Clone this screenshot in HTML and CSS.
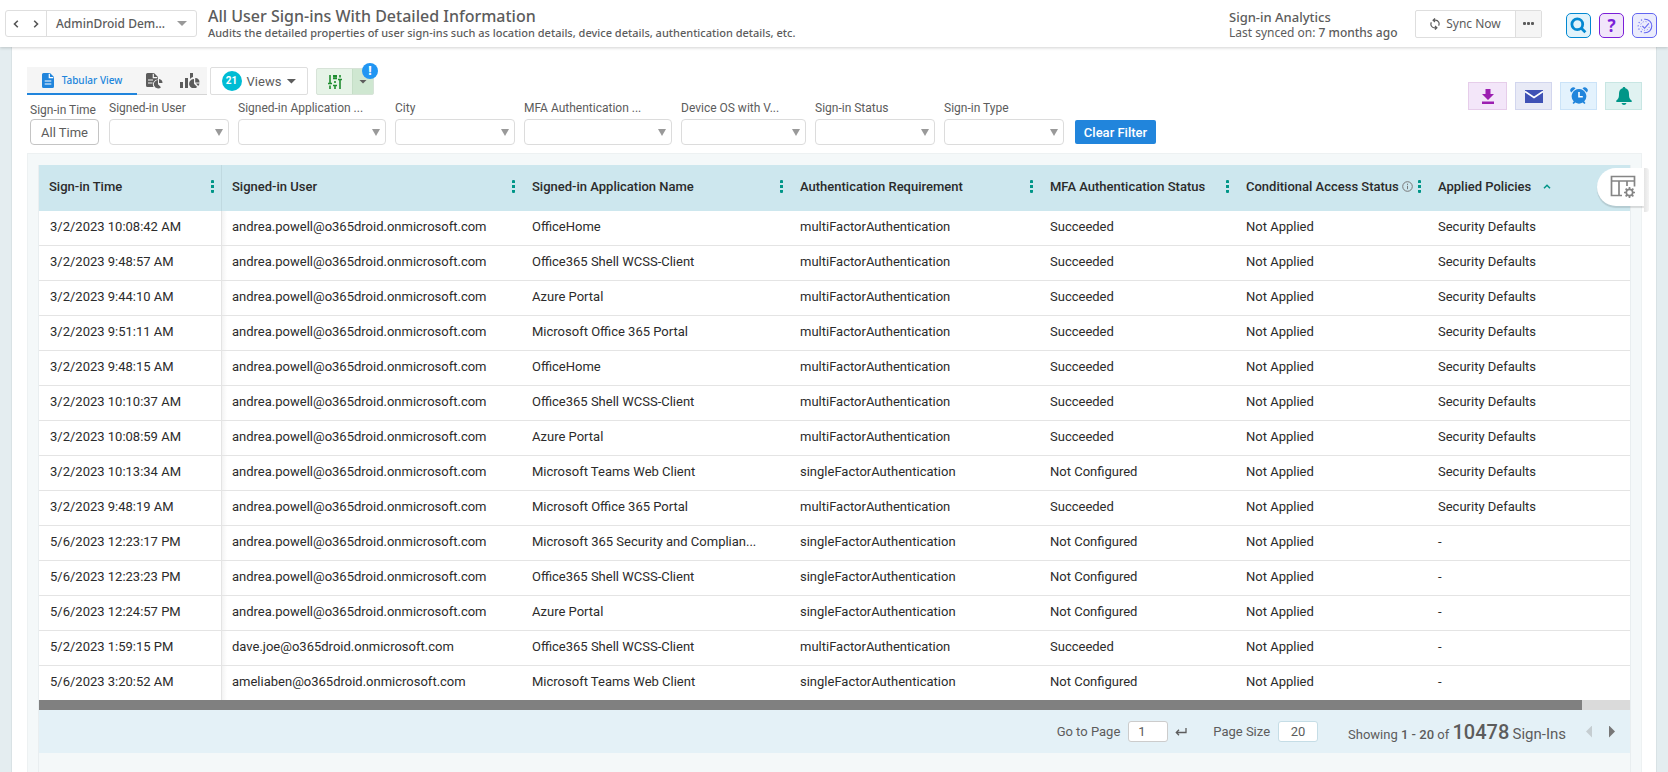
FILE: index.html
```html
<!DOCTYPE html>
<html lang="en">
<head>
    <meta charset="UTF-8">
    <meta name="viewport" content="width=device-width, initial-scale=1.0">
    <title>All User Sign-ins With Detailed Information</title>
    <link rel="stylesheet" href="styles.css">
    <script src="script.js" defer></script>
</head>
<body>
    <header class="topbar">
        <div class="report-nav">
            <button class="nav-arrow" aria-label="Previous report"><svg width="6" height="8" viewBox="0 0 6 8"><path d="M4.800.8 1.500 4l3.300 3.200"/></svg></button>
            <button class="nav-arrow" aria-label="Next report"><svg width="6" height="8" viewBox="0 0 6 8"><path d="M1.200.8 4.500 4 1.200 7.200"/></svg></button>
            <button class="tenant">AdminDroid Dem...<span class="caret"></span></button>
        </div>
        <div class="heading">
            <h1>All User Sign-ins With Detailed Information</h1>
            <p>Audits the detailed properties of user sign-ins such as location details, device details, authentication details, etc.</p>
        </div>
        <div class="sync-info">
            <strong>Sign-in Analytics</strong>
            <span>Last synced on: <b>7 months ago</b></span>
        </div>
        <div class="sync-group">
            <button class="sync-now"><svg width="10" height="12" viewBox="0 0 10 12"><path d="M3.2 2.2H5.5A3.6 3.6 0 0 1 8.6 7.6M6.8 9.8H4.5A3.6 3.6 0 0 1 1.4 4.4M5 .4 3.1 2.2 5 4M5 8l1.9 1.8L5 11.6"/></svg>Sync Now</button>
            <button class="sync-more" aria-label="More"><i></i><i></i><i></i></button>
        </div>
        <div class="top-icons">
            <button class="top-icon search" aria-label="Search"><svg width="17" height="17" viewBox="0 0 17 17"><circle cx="7.3" cy="7.3" r="5.4"/><path d="m10.8 10.8 4.6 4.4"/></svg></button>
            <button class="top-icon help" aria-label="Help">?</button>
            <button class="top-icon tour" aria-label="Tour"><svg width="16" height="16" viewBox="0 0 16 16"><path d="M8 1.2a6.8 6.8 0 0 1 0 13.6"/><path d="M8 14.8A6.8 6.8 0 0 1 8 1.2" stroke-dasharray="1.200 2.200"/><path d="M9.500 3.800A4.400 4.400 0 1 0 12.400 8" stroke-width=".8" stroke-dasharray="1 1.800"/><path d="m5.4 8 2.2 2.3 4.2-5"/></svg></button>
        </div>
    </header>

    <main class="page">
        <section class="controls">
            <div class="controls-left">
                <div class="toolbar">
                    <div class="tabs">
                        <button class="tab selected"><svg width="12" height="15" viewBox="0 0 12 15"><path fill="currentColor" d="M1.5 0H8l4 4v9.500a1.500 1.500 0 0 1-1.500 1.500h-9A1.500 1.500 0 0 1 0 13.500v-12A1.500 1.500 0 0 1 1.500 0z"/><path d="M7.300.8v3.900h4M2.700 8h6.600M2.700 11h6.600" fill="none" stroke="#fff" stroke-width="1.200"/></svg>Tabular View</button>
                        <button class="tab icon-tab" aria-label="Report view"><svg width="17" height="16" viewBox="0 0 17 16"><path fill="currentColor" d="M1.500 0H8l4 4v2.500A5 5 0 0 0 7.600 14H1.500A1.500 1.500 0 0 1 0 12.500v-11A1.500 1.500 0 0 1 1.500 0zM12 7v4.300l3 2.900A4.200 4.200 0 1 1 12 7zM13 6a4 4 0 0 1 3.500 4H13z"/><path d="M7.300.8v3.900h4M2 7h5M2 10h4.500" fill="none" stroke="#f5f5f5" stroke-width="1.200"/></svg></button>
                        <button class="tab icon-tab" aria-label="Chart view"><svg width="20" height="15" viewBox="0 0 20 15"><path fill="currentColor" d="M0 9h3v6H0zM5 5h3v10H5zM10 0h3v4a6 6 0 0 0-3 2zM14 6v4.800l3.200 3.200A4.700 4.700 0 1 1 14 6zM15.200 5a4.500 4.500 0 0 1 4.300 4.500h-4.300zM16 10.500h3.500a4 4 0 0 1-1.300 2.500z"/></svg></button>
                    </div>
                    <button class="views"><span class="count">21</span>Views<span class="caret"></span></button>
                    <div class="filter-toggle">
                        <button class="filter-main" aria-label="Filters"><svg width="14" height="14" viewBox="0 0 14 14"><path d="M2 0v8M2 10.500V14M0 8.500h4M7 0v2.500M7 6v2M5 3.500h4M5 10.500h4M7 10v4M5.800 0v2.500M8.200 0v2.500M12 0v2.500M12 5v9M10 4.500h4"/></svg></button>
                        <button class="filter-drop" aria-label="Filter options"><span class="caret"></span></button>
                        <span class="alert">!</span>
                    </div>
                </div>
                <div class="filters">
                    <div class="filter time">
                        <label for="time">Sign-in Time</label>
                        <button id="time">All Time</button>
                    </div>
                    <div class="filter">
                        <label for="user">Signed-in User</label>
                        <select id="user"></select>
                    </div>
                    <div class="filter wide">
                        <label for="app">Signed-in Application ...</label>
                        <select id="app"></select>
                    </div>
                    <div class="filter">
                        <label for="city">City</label>
                        <select id="city"></select>
                    </div>
                    <div class="filter wide">
                        <label for="mfa">MFA Authentication ...</label>
                        <select id="mfa"></select>
                    </div>
                    <div class="filter medium">
                        <label for="os">Device OS with V...</label>
                        <select id="os"></select>
                    </div>
                    <div class="filter">
                        <label for="status">Sign-in Status</label>
                        <select id="status"></select>
                    </div>
                    <div class="filter">
                        <label for="type">Sign-in Type</label>
                        <select id="type"></select>
                    </div>
                    <button class="clear">Clear Filter</button>
                </div>
            </div>
            <div class="actions">
                <button class="action download" aria-label="Download"><svg width="14" height="15" viewBox="0 0 14 15"><path fill="currentColor" d="M4.500 0h5v5H13l-6 6-6-6h3.500zM1 12.500h12V15H1z"/></svg></button>
                <button class="action mail" aria-label="Email"><svg width="18" height="13" viewBox="0 0 18 13"><path fill="currentColor" d="M0 0h18v13H0z"/><path d="m0 1.500 9 6 9-6" fill="none" stroke="#fff" stroke-width="1.600"/></svg></button>
                <button class="action schedule" aria-label="Schedule"><svg width="18" height="18" viewBox="0 0 18 18"><path fill="currentColor" d="M9 2a7.300 7.300 0 0 1 5.200 12.400l1.300 1.500-1.200 1.100-1.500-1.500a7.300 7.300 0 0 1-7.600 0L3.700 17l-1.200-1.100 1.300-1.500A7.300 7.300 0 0 1 9 2zM1.200 5.500A2.800 2.800 0 0 1 5.500 1.200zM12.500 1.200a2.800 2.800 0 0 1 4.300 4.300z"/><path d="M9 5v4.800h3.800" fill="none" stroke="#fff" stroke-width="1.600"/></svg></button>
                <button class="action notify" aria-label="Alerts"><svg width="16" height="18" viewBox="0 0 16 18"><path fill="currentColor" d="M8 0c.8 0 1.300.5 1.400 1.300C12 2 13 4.300 13 7c0 4 .8 5 2.700 6.500V15H.3v-1.500C2.200 12 3 11 3 7c0-2.700 1-5 3.600-5.700C6.700.5 7.200 0 8 0zM5.500 16h5c-.4 1.300-1.300 2-2.500 2s-2.100-.7-2.500-2z"/></svg></button>
            </div>
        </section>

        <section class="panel">
            <button class="column-settings" aria-label="Column settings"><svg width="26" height="24" viewBox="0 0 26 24"><path d="M12 20.500H1.500v-19h23v10M1.500 6h23M9 6v14.500M17 6v5"/><circle cx="19.500" cy="17.500" r="3.200"/><path d="M19.500 12v2.300M19.500 20.700V23M14 17.500h2.300M22.700 17.500H25M15.600 13.600l1.600 1.600M21.800 19.800l1.600 1.600M23.400 13.600l-1.600 1.600M17.200 19.800l-1.600 1.600"/></svg></button>
            <div class="grid">
                <table>
                    <colgroup>
                        <col class="c-time"><col class="c-user"><col class="c-app"><col class="c-req"><col class="c-mfa"><col class="c-access"><col>
                    </colgroup>
                    <thead>
                        <tr>
                            <th><div>Sign-in Time<span class="dots"></span></div></th>
                            <th><div>Signed-in User<span class="dots"></span></div></th>
                            <th><div>Signed-in Application Name<span class="dots"></span></div></th>
                            <th><div>Authentication Requirement<span class="dots"></span></div></th>
                            <th><div>MFA Authentication Status<span class="dots"></span></div></th>
                            <th><div>Conditional Access Status<svg class="info" width="11" height="11" viewBox="0 0 11 11"><circle cx="5.500" cy="5.500" r="4.800"/><path d="M5.500 4.800v3.400M5.500 2.700v1.200"/></svg><span class="dots"></span></div></th>
                            <th><div>Applied Policies<svg class="sort" width="8" height="5" viewBox="0 0 8 5"><path d="M1 4.300 4 1.300l3 3"/></svg></div></th>
                        </tr>
                    </thead>
                    <tbody id="signins"></tbody>
                </table>
                <div class="scroll-track"><div class="scroll-thumb"></div></div>
                <footer class="pager">
                    <label for="page">Go to Page</label>
                    <input id="page" class="page-no" value="1">
                    <button class="go" aria-label="Go"><svg width="12" height="8" viewBox="0 0 12 8"><path d="M11 0v4.500H1.500M4 1.800 1.300 4.500 4 7.200"/></svg></button>
                    <label for="size">Page Size</label>
                    <input id="size" class="page-size" value="20">
                    <div class="showing">Showing <b>1 - 20</b> of <strong>10478</strong> <span>Sign-Ins</span></div>
                    <button class="step prev" aria-label="Previous page"></button>
                    <button class="step next" aria-label="Next page"></button>
                </footer>
            </div>
        </section>
    </main>
</body>
</html>
```
FILE: styles.css
```css
* { box-sizing: border-box; }
body { margin: 0; height: 100vh; overflow: hidden; display: flex; flex-direction: column; background: #e4edf0; font-family: Roboto, "Liberation Sans", sans-serif; font-size: 13px; color: #5c5c5c; }
button, input, select { font: inherit; color: inherit; margin: 0; padding: 0; }
button { border: none; background: none; cursor: pointer; display: flex; align-items: center; justify-content: center; }
svg { display: block; flex: none; }
.caret { width: 10px; height: 5px; background: #5c5c5c; clip-path: polygon(0 0, 100% 0, 50% 100%); }

/* top bar */
.topbar { position: relative; z-index: 1; flex: none; height: 47px; padding: 0 11px 0 5px; display: flex; align-items: center; background: #fff; box-shadow: 0 1px 3px rgba(0, 0, 0, 0.18); font-family: "Noto Sans", "Open Sans", sans-serif; }
.report-nav { display: flex; width: 192px; height: 27px; border: 1px solid #dedede; border-radius: 3px; }
.nav-arrow { width: 20px; }
.nav-arrow svg { fill: none; stroke: #555; stroke-width: 1.6; }
.tenant { flex: 1; justify-content: space-between; padding: 0 9px; border-left: 1px solid #dedede; font-size: 12px; font-weight: 500; }
.tenant .caret { background: #999; }
.heading { flex: 1; margin-left: 11px; }
h1 { margin: 0; font-size: 16px; line-height: 18px; font-weight: 500; }
.heading p { margin: 0; font-size: 11px; line-height: 15px; font-weight: 500; }
.sync-info { width: 186px; padding-top: 2px; display: flex; flex-direction: column; line-height: 16px; }
.sync-info span { font-size: 12px; }
.sync-info strong, .sync-info b { font-weight: 500; }
.sync-group { display: flex; width: 127px; height: 28px; border: 1px solid #dedede; border-radius: 2px; }
.sync-now { flex: 1; gap: 6px; font-size: 12px; }
.sync-now svg { fill: none; stroke: #5c5c5c; stroke-width: 1.2; }
.sync-more { width: 26px; gap: 1px; background: #f5f5f5; border-left: 1px solid #dedede; }
.sync-more i { width: 3px; height: 3px; border-radius: 1px; background: #5c5c5c; }
.top-icons { display: flex; gap: 8px; margin-left: 24px; padding-top: 4px; }
.top-icon { width: 25px; height: 25px; border: 1px solid; border-radius: 5px; }
.top-icon svg { fill: none; stroke: currentColor; }
.search { color: #0288d1; background: #e1f3fb; }
.search svg { stroke-width: 2.8; }
.help { color: #7b1fd8; background: #f1e6fa; font-size: 17px; font-weight: 700; }
.tour { color: #6366f1; background: #ebecfc; }
.tour svg { stroke-width: 1.1; }

/* page */
.page { flex: 1; margin: 0 11px; padding: 20px 14px 0 15px; background: #fff; border: 1px solid #d9e2e5; border-width: 0 1px; display: flex; flex-direction: column; }
.controls { display: flex; justify-content: space-between; height: 86px; flex: none; }
.toolbar { display: flex; gap: 3px; height: 28px; }
.tabs { display: flex; background: #f5f5f5; border-bottom: 1px solid #d5d5d5; }
.tab { width: 35px; color: #5c5c5c; }
.tab.selected { width: 110px; gap: 8px; height: 28px; color: #2185dc; border-bottom: 2px solid #2185dc; font-family: "Noto Sans", sans-serif; font-size: 10px; font-weight: 500; }
.views { width: 98px; gap: 5px; border: 1px solid #dedede; border-radius: 2px; }
.count { width: 20px; height: 20px; border-radius: 50%; background: #00bcd4; color: #fff; font-size: 10px; line-height: 20px; font-weight: 700; }
.filter-toggle { position: relative; display: flex; width: 58px; height: 27px; margin: 1px 0 0 5px; border: 1px solid #d7e3d8; border-radius: 2px; background: #e6f3e7; }
.filter-main { flex: 1; }
.filter-main svg { fill: none; stroke: #1e8c2f; stroke-width: 1.6; }
.filter-drop { width: 21px; background: #cfe7d1; border-left: 1px solid #c5dec7; }
.filter-drop .caret { width: 8px; height: 4px; }
.alert { position: absolute; top: -6px; right: -5px; width: 16px; height: 16px; border-radius: 50%; background: #2196f3; color: #fff; font-size: 12px; line-height: 16px; font-weight: 900; text-align: center; }

.filters { display: flex; align-items: flex-end; gap: 9px; height: 50px; padding-left: 3px; }
.filter { position: relative; width: 120px; }
.filter.wide { width: 148px; }
.filter.medium { width: 125px; }
.filter label { display: block; font-size: 12px; line-height: 16px; margin-bottom: 3px; white-space: nowrap; }
.filter select { display: block; appearance: none; width: 100%; height: 26px; border: 1px solid #dcdcdc; border-radius: 4px; background: #fff; }
.filter:not(.time)::after { content: ""; position: absolute; right: 6px; bottom: 9px; width: 8px; height: 7px; background: #999; clip-path: polygon(0 0, 100% 0, 50% 100%); }
.filter.time { width: 70px; }
.time label { margin-bottom: 1px; }
.time button { width: 69px; height: 26px; border: 1px solid #c4c4c4; border-radius: 4px; }
.clear { width: 81px; height: 24px; margin: 0 0 1px 2px; border-radius: 2px; background: #2185dc; color: #fff; font-weight: 500; }

.actions { display: flex; gap: 8px; padding-top: 15px; }
.action { width: 37px; height: 28px; border: 1px solid; }
.download { width: 39px; color: #9c1fb1; background: #f3e6f9; border-color: #e6cdea; }
.mail { color: #3f51b5; background: #e8eaf6; border-color: #d2d6ee; }
.schedule { color: #2185dc; background: #e3f2fd; border-color: #cbe3f8; }
.notify { color: #009688; background: #e0f2f1; border-color: #c8e6e3; }

/* results */
.panel { position: relative; flex: 1; padding: 11px 10px 0; background: #f4f8f9; border: 1px solid #edf1f2; border-bottom: none; }
.grid { border-right: 1px solid #e9eef0; border-left: 1px solid #e9eef0; height: 100%; }
.column-settings { position: absolute; top: 14px; right: -3px; width: 47px; height: 38px; padding-left: 4px; background: #fff; border-radius: 19px 0 0 19px; box-shadow: 0 2px 1px rgba(0, 0, 0, 0.12); }
.column-settings::after { content: ""; position: absolute; top: 0; left: 100%; width: 5px; height: 44px; border-radius: 0 3px 3px 0; background: linear-gradient(90deg, #e4e4e4, #f4f4f4); }
.column-settings svg { fill: none; stroke: #858585; stroke-width: 1.7; }
table { width: 100%; table-layout: fixed; border-collapse: separate; border-spacing: 0; background: #fff; color: #2b2b2b; }
.c-time { width: 183px; }
.c-user { width: 300px; }
.c-app { width: 268px; }
.c-req { width: 250px; }
.c-mfa { width: 196px; }
.c-access { width: 192px; }
th { height: 46px; padding: 0 7px 4px 10px; background: #cde7ee; text-align: left; font-weight: 500; }
th div { display: flex; align-items: center; white-space: nowrap; }
th:first-child { border-right: 1px solid #c0d9e0; }
.dots { margin-left: auto; width: 3px; height: 13px; background: repeating-linear-gradient(#009688 0 3px, transparent 3px 5px); border-radius: 1px; }
.info { margin-left: 3px; fill: none; stroke: #777; }
.sort { margin-left: 12px; fill: none; stroke: #009688; stroke-width: 1.5; }
td { height: 35px; padding: 0 10px 3px; border-bottom: 1px solid #e4e4e4; white-space: nowrap; overflow: hidden; text-overflow: ellipsis; }
td:first-child { padding-left: 11px; border-right: 1px solid #e4e4e4; }
td:nth-child(2) { background: linear-gradient(90deg, #f3f3f3, #fff 5px); }
tr:last-child td { height: 34px; border-bottom: none; }
.scroll-track { height: 10px; background: #dadada; }
.scroll-thumb { width: 97%; height: 10px; background: #808080; }
.pager { display: flex; align-items: center; justify-content: flex-end; height: 43px; padding-right: 15px; background: #e4f1f7; }
.pager input { width: 40px; height: 21px; margin-left: 8px; border: 1px solid #ccc; border-radius: 3px; background: #fff; }
.page-no { padding-left: 9px; }
.pager .page-size { border-color: #c5dde6; text-align: center; }
.go { margin: 0 26px 0 7px; }
.go svg { fill: none; stroke: #5c5c5c; stroke-width: 1.3; }
.showing { margin: 0 20px 0 30px; }
.showing b { font-weight: 500; }
.showing strong { font-size: 20px; font-weight: 500; }
.showing span { font-size: 15px; }
.step { width: 6px; height: 12px; background: #777; clip-path: polygon(0 0, 100% 50%, 0 100%); }
.step.prev { background: #c5cdd1; margin-right: 17px; clip-path: polygon(100% 0, 0 50%, 100% 100%); }
```
FILE: script.js
```js
const domain = "@o365droid.onmicrosoft.com";
const multi = "multiFactorAuthentication";
const single = "singleFactorAuthentication";

const signins = [
    ["3/2/2023 10:08:42 AM", "andrea.powell", "OfficeHome", multi, "Succeeded", "Security Defaults"],
    ["3/2/2023 9:48:57 AM", "andrea.powell", "Office365 Shell WCSS-Client", multi, "Succeeded", "Security Defaults"],
    ["3/2/2023 9:44:10 AM", "andrea.powell", "Azure Portal", multi, "Succeeded", "Security Defaults"],
    ["3/2/2023 9:51:11 AM", "andrea.powell", "Microsoft Office 365 Portal", multi, "Succeeded", "Security Defaults"],
    ["3/2/2023 9:48:15 AM", "andrea.powell", "OfficeHome", multi, "Succeeded", "Security Defaults"],
    ["3/2/2023 10:10:37 AM", "andrea.powell", "Office365 Shell WCSS-Client", multi, "Succeeded", "Security Defaults"],
    ["3/2/2023 10:08:59 AM", "andrea.powell", "Azure Portal", multi, "Succeeded", "Security Defaults"],
    ["3/2/2023 10:13:34 AM", "andrea.powell", "Microsoft Teams Web Client", single, "Not Configured", "Security Defaults"],
    ["3/2/2023 9:48:19 AM", "andrea.powell", "Microsoft Office 365 Portal", multi, "Succeeded", "Security Defaults"],
    ["5/6/2023 12:23:17 PM", "andrea.powell", "Microsoft 365 Security and Complian...", single, "Not Configured", "-"],
    ["5/6/2023 12:23:23 PM", "andrea.powell", "Office365 Shell WCSS-Client", single, "Not Configured", "-"],
    ["5/6/2023 12:24:57 PM", "andrea.powell", "Azure Portal", single, "Not Configured", "-"],
    ["5/2/2023 1:59:15 PM", "dave.joe", "Office365 Shell WCSS-Client", multi, "Succeeded", "-"],
    ["5/6/2023 3:20:52 AM", "ameliaben", "Microsoft Teams Web Client", single, "Not Configured", "-"]
];

document.getElementById("signins").innerHTML = signins.map(([time, user, app, requirement, mfa, policies]) => `
    <tr>
        <td>${time}</td>
        <td>${user}${domain}</td>
        <td>${app}</td>
        <td>${requirement}</td>
        <td>${mfa}</td>
        <td>Not Applied</td>
        <td>${policies}</td>
    </tr>
`).join("");
```
